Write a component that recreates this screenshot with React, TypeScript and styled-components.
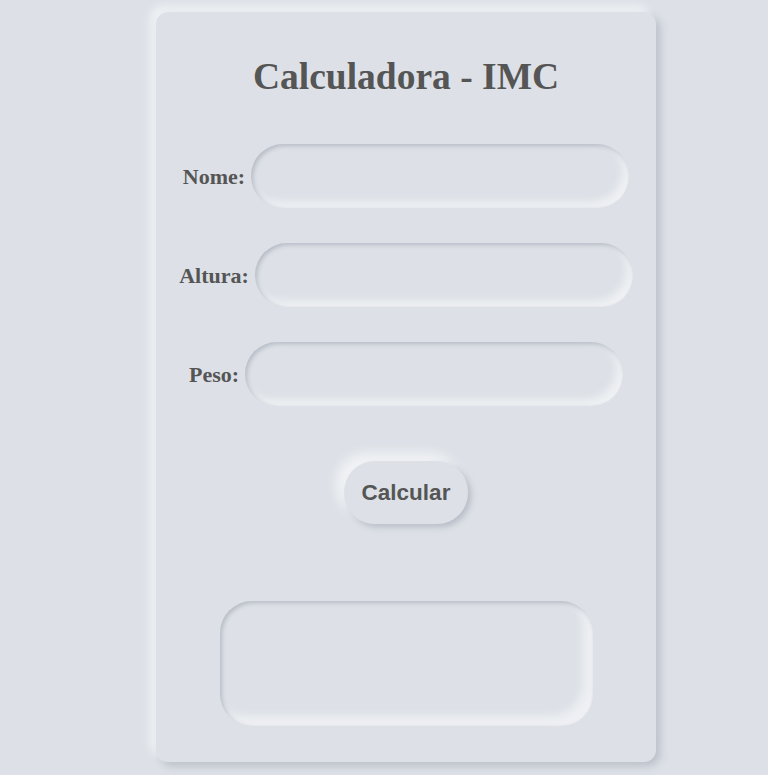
import styled, { createGlobalStyle } from "styled-components";

const GlobalStyle = createGlobalStyle`
  html, body {
    margin: 0;
    padding: 0;
    background: #dde1e7;
  }
  body {
    font-family: "Liberation Serif", "Times New Roman", serif;
  }
`;

export default function App() {
  return (
    <Page>
      <GlobalStyle />
      <Card>
        <Title>Calculadora - IMC</Title>
        <Fields>
          <Row>
            <Label htmlFor="nome">Nome:</Label>
            <Input id="nome" type="text" />
          </Row>
          <Row>
            <Label htmlFor="altura">Altura:</Label>
            <Input id="altura" type="text" />
          </Row>
          <Row>
            <Label htmlFor="peso">Peso:</Label>
            <Input id="peso" type="text" />
          </Row>
        </Fields>
        <Button type="button">Calcular</Button>
        <Result />
      </Card>
    </Page>
  );
}

const Page = styled.div`
  padding: 12px 0 0 156px;
  min-height: 775px;
  box-sizing: border-box;
`;

const Card = styled.div`
  width: 500px;
  height: 750px;
  box-sizing: border-box;
  padding-top: 42px;
  border-radius: 12px;
  background: #dde1e7;
  box-shadow: -6px -6px 10px rgba(255, 255, 255, 0.55),
    4px 4px 8px rgba(94, 104, 121, 0.28);
  display: flex;
  flex-direction: column;
  align-items: center;
`;

const Title = styled.h1`
  margin: 0;
  font-size: 37.5px;
  line-height: 46px;
  font-weight: bold;
  color: #555;
  font-family: "Liberation Serif", "Times New Roman", serif;
`;

const Fields = styled.div`
  margin-top: 44px;
  display: flex;
  flex-direction: column;
  gap: 35px;
`;

const Row = styled.div`
  display: flex;
  align-items: center;
  justify-content: center;
  gap: 6px;
`;

const Label = styled.label`
  padding-top: 2px;
  font-size: 22px;
  font-weight: bold;
  color: #555;
  font-family: "Liberation Serif", "Times New Roman", serif;
`;

const Input = styled.input`
  width: 378px;
  height: 64px;
  box-sizing: border-box;
  border: none;
  outline: none;
  border-radius: 32px;
  padding: 0 24px;
  background: #dde1e7;
  font-size: 18px;
  color: #555;
  box-shadow: inset 2px 2px 4px rgba(94, 104, 121, 0.3),
    inset -6px -6px 8px rgba(255, 255, 255, 0.55);
`;

const Button = styled.button`
  margin-top: 55px;
  height: 63px;
  padding: 0 18px;
  border: none;
  border-radius: 31px;
  background: #dde1e7;
  color: #555;
  font-family: "Liberation Sans", Arial, sans-serif;
  font-size: 22.5px;
  font-weight: bold;
  cursor: pointer;
  box-shadow: -8px -8px 12px rgba(255, 255, 255, 0.6),
    3px 3px 6px rgba(94, 104, 121, 0.3);
`;

const Result = styled.div`
  margin-top: 77px;
  width: 373px;
  height: 125px;
  box-sizing: border-box;
  border-radius: 32px;
  background: #dde1e7;
  box-shadow: inset 2px 2px 4px rgba(94, 104, 121, 0.3),
    inset -10px -10px 10px rgba(255, 255, 255, 0.5);
`;
